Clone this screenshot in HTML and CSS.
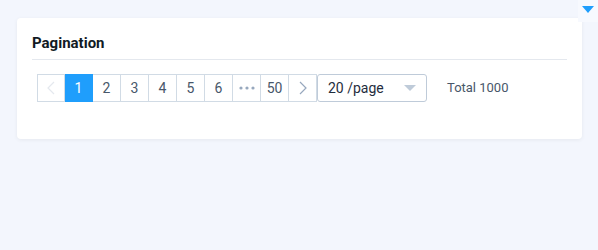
FILE: index.html
```html
<!DOCTYPE html>
<html lang="en">
<head>
    <meta charset="UTF-8">
    <meta name="viewport" content="width=device-width, initial-scale=1.0">
    <title>Pagination</title>
    <link rel="stylesheet" href="styles.css">
</head>
<body>

    <div class="top-toggle">
        <span class="toggle-caret"></span>
    </div>

    <div class="card">
        <div class="card-header">
            <h2>Pagination</h2>
        </div>
        <div class="card-body">
            <div class="pagination">
                <ul class="pager">
                    <li class="btn-prev disabled">
                        <svg width="8" height="14" viewBox="0 0 8 14"><path d="M7 1 L1 7 L7 13" fill="none" stroke="currentColor" stroke-width="1.2"/></svg>
                    </li>
                    <li class="number active">1</li>
                    <li class="number">2</li>
                    <li class="number">3</li>
                    <li class="number">4</li>
                    <li class="number">5</li>
                    <li class="number">6</li>
                    <li class="number more">
                        <svg width="16" height="4" viewBox="0 0 16 4"><circle cx="2" cy="2" r="1.6" fill="currentColor"/><circle cx="8" cy="2" r="1.6" fill="currentColor"/><circle cx="14" cy="2" r="1.6" fill="currentColor"/></svg>
                    </li>
                    <li class="number">50</li>
                    <li class="btn-next">
                        <svg width="8" height="14" viewBox="0 0 8 14"><path d="M1 1 L7 7 L1 13" fill="none" stroke="currentColor" stroke-width="1.2"/></svg>
                    </li>
                </ul>
                <div class="page-select">
                    <span>20 /page</span>
                    <span class="select-caret"></span>
                </div>
                <span class="total">Total 1000</span>
            </div>
        </div>
    </div>

</body>
</html>
```

FILE: styles.css
```css
body {
    font-family: Roboto, "Liberation Sans", Arial, sans-serif;
    background-color: #f3f6fd;
    margin: 0;
    height: 250px;
    padding-top: 18px;
    box-sizing: border-box;
}

/* toggle in the corner */
.top-toggle {
    position: absolute;
    top: 0;
    right: 0;
    width: 20px;
    height: 22px;
    background-color: #f7f9fe;
    display: flex;
    justify-content: center;
    padding-top: 6px;
    box-sizing: border-box;
}

.toggle-caret {
    width: 0;
    height: 0;
    border-left: 6px solid transparent;
    border-right: 6px solid transparent;
    border-top: 7px solid #1f9efc;
}

.card {
    margin: 0 16px 0 17px;
    background-color: #fff;
    border-radius: 4px;
    box-shadow: 0 1px 4px rgba(0, 0, 0, 0.06);
    padding: 0 15px 37px;
}

.card-header {
    padding: 15px 0 6px;
    border-bottom: 1px solid #e4e8ee;
}

.card-header h2 {
    margin: 0;
    font-size: 15px;
    line-height: 20px;
    font-weight: bold;
    color: #111a24;
}

.card-body {
    padding-top: 14px;
}

.pagination {
    display: flex;
    align-items: center;
    margin-left: 5px;
    font-size: 14px;
    color: #48576a;
}

.pager {
    list-style: none;
    margin: 0;
    padding: 0;
    display: flex;
    border-left: 1px solid #d1dbe5;
}

.pager li {
    width: 28px;
    height: 28px;
    box-sizing: border-box;
    border-top: 1px solid #d1dbe5;
    border-bottom: 1px solid #d1dbe5;
    border-right: 1px solid #d1dbe5;
    display: flex;
    justify-content: center;
    align-items: center;
}

.pager li.btn-prev {
    width: 27px;
    color: #e4e8ee;
}

.pager li.btn-next {
    color: #97a8be;
}

.pager li.active {
    background-color: #1f9efc;
    border-color: #1f9efc;
    color: #fff;
}

.pager li.more {
    color: #97a8be;
}

.page-select {
    width: 110px;
    height: 28px;
    box-sizing: border-box;
    border: 1px solid #bfcbd9;
    border-radius: 3px;
    padding: 0 10px;
    display: flex;
    justify-content: space-between;
    align-items: center;
    font-size: 14px;
    color: #1f2d3d;
}

.select-caret {
    width: 0;
    height: 0;
    border-left: 6px solid transparent;
    border-right: 6px solid transparent;
    border-top: 6px solid #bfcbd9;
}

.total {
    margin-left: 20px;
    margin-top: -2px;
    font-size: 13px;
}
```
